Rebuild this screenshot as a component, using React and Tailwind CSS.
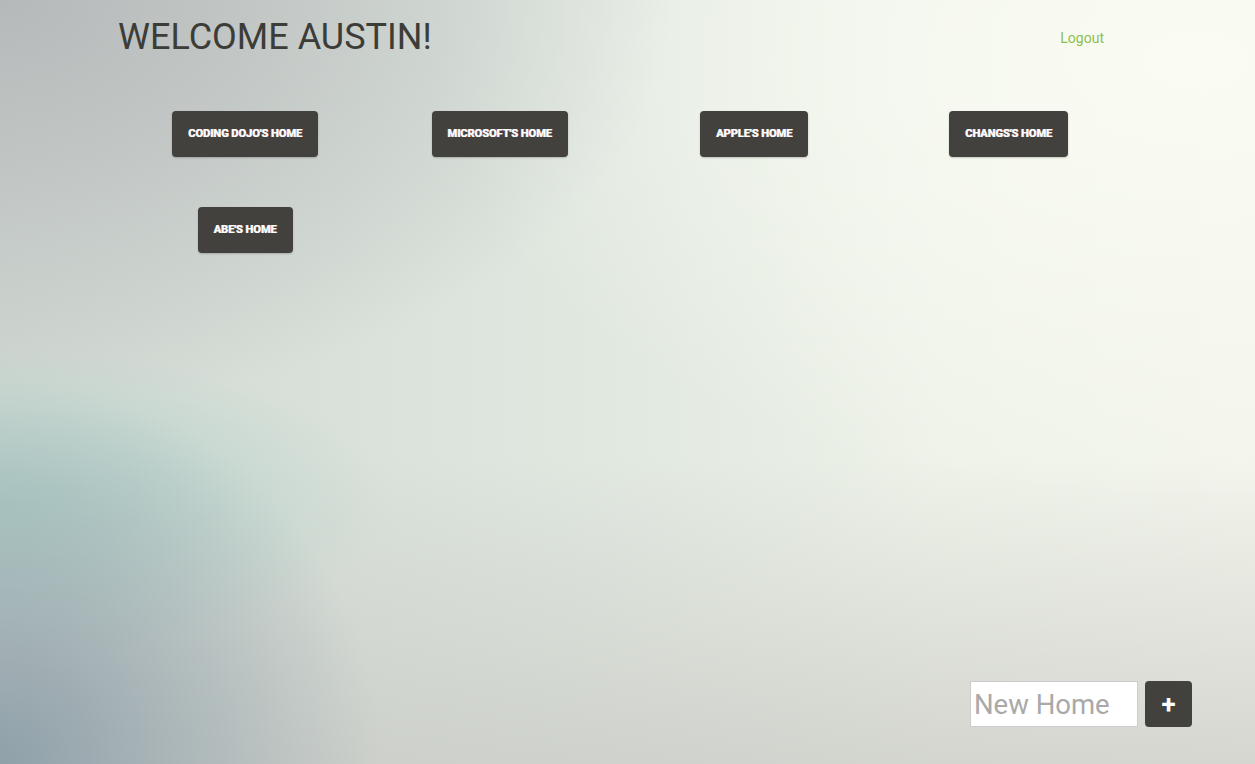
const homes = ["Coding Dojo's Home", "Microsoft's Home", "Apple's Home", "Changs's Home", "Abe's Home"];

export default function App() {
  return (
    <div className="min-h-[764px] w-full relative font-['Roboto',sans-serif] bg-[radial-gradient(circle_at_0%_100%,rgba(140,158,168,0.95)_0%,rgba(140,158,168,0)_26%),radial-gradient(ellipse_at_0%_66%,rgba(170,206,198,0.8)_0%,rgba(170,206,198,0)_22%),radial-gradient(ellipse_at_0%_0%,rgba(182,185,186,1)_0%,rgba(182,185,186,0)_38%),radial-gradient(ellipse_at_95%_8%,rgba(250,252,244,1)_0%,rgba(250,252,244,0)_45%),linear-gradient(to_bottom,rgba(200,201,196,0)_60%,rgba(200,201,196,0.7)_100%),linear-gradient(to_right,#d0d8d2_0%,#dfe7df_45%,#eef2e8_75%,#f3f5ec_100%)]">
      <div className="w-[1018px] ml-[118px]">
        {/* header */}
        <div className="flex items-start justify-between pt-[14px]">
          <h1 className="text-[36px] leading-[46px] text-[#3c3c38]">WELCOME AUSTIN!</h1>
          <a href="#" className="text-[14px] text-[#8dc04a] mt-[14px] mr-[32px]">Logout</a>
        </div>

        {/* homes grid */}
        <div className="grid grid-cols-4 gap-y-[50px] mt-[51px]">
          {homes.map((h) => (
            <div key={h} className="flex justify-center">
              <button className="h-[46px] px-[16px] rounded-[4px] bg-[#42413d] text-white text-[11px] font-bold uppercase [text-shadow:-0.5px_0_0_#9ab,0.5px_0_0_#fcc] shadow-[0_1px_2px_rgba(0,0,0,0.2)]">
                {h}
              </button>
            </div>
          ))}
        </div>
      </div>

      {/* new home form */}
      <div className="absolute left-[970px] top-[681px] flex gap-[7px]">
        <input
          placeholder="New Home"
          className="w-[168px] h-[46px] bg-white border border-[#cccccc] px-[3px] text-[27.5px] text-[#555] placeholder:text-[#a9a9a9] outline-none"
        />
        <button className="w-[47px] h-[46px] rounded-[4px] bg-[#42413d] text-white text-[26px] font-bold leading-none flex items-center justify-center">
          +
        </button>
      </div>
    </div>
  );
}
